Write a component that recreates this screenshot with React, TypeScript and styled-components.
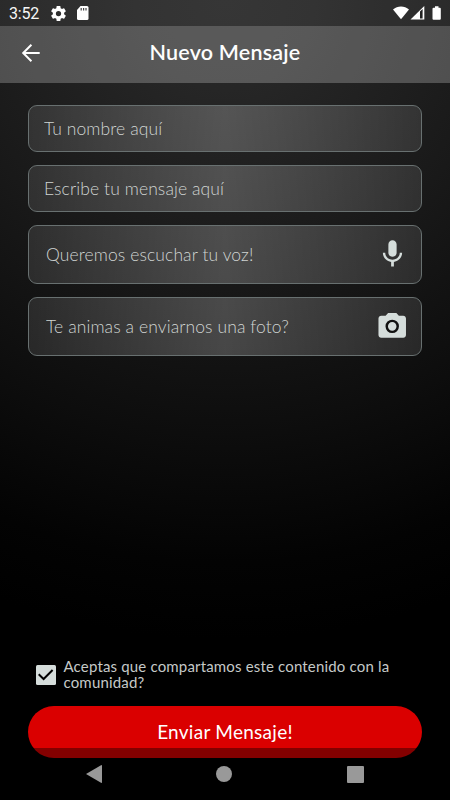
import React from "react";
import styled, { createGlobalStyle } from "styled-components";

const GlobalStyle = createGlobalStyle`
  * { box-sizing: border-box; }
  body { margin: 0; background: #000; }
`;

const Screen = styled.div`
  position: relative;
  display: flex;
  flex-direction: column;
  width: 450px;
  height: 800px;
  overflow: hidden;
  font-family: Lato, "Open Sans", sans-serif;
  background: radial-gradient(ellipse 640px 640px at 50% 0, #292929 0%, #262626 14%, #191919 43%, #0d0d0d 68%, #030303 88%, #000 100%), #000;
`;

const StatusBar = styled.div`
  display: flex;
  align-items: center;
  height: 26px;
  padding: 0 8px 0 9px;
  background: rgba(255, 255, 255, 0.063);
  color: #fff;
  font-family: Roboto, sans-serif;
  font-size: 16px;
`;

const Clock = styled.span`
  width: 42px;
  padding-top: 2px;
  line-height: 26px;
  letter-spacing: -0.2px;
  opacity: 0.96;
`;

const StatusIcons = styled.div<{ $end?: boolean }>`
  display: flex;
  align-items: center;
  margin-left: ${(p) => (p.$end ? "auto" : "0")};
`;

const Header = styled.header`
  display: grid;
  grid-template-columns: 50px 1fr 50px;
  align-items: center;
  height: 57px;
  padding: 0 6px;
  background: rgba(255, 255, 255, 0.23);
`;

const BackButton = styled.button`
  display: flex;
  justify-content: center;
  padding: 0 0 4px;
  border: 0;
  background: none;
`;

const Title = styled.h1`
  margin: 0;
  padding-bottom: 6px;
  color: #fff;
  font-size: 21.5px;
  font-weight: 600;
  letter-spacing: 0.2px;
  line-height: 26px;
  text-align: center;
  white-space: nowrap;
  opacity: 0.99;
`;

const Form = styled.main`
  display: flex;
  flex: 1;
  flex-direction: column;
  gap: 13px;
  padding: 22px 28px 0;
`;

const Field = styled.div<{ $tall?: boolean }>`
  display: flex;
  flex-shrink: 0;
  align-items: center;
  justify-content: space-between;
  height: ${(p) => (p.$tall ? 59 : 47)}px;
  padding: 0 ${(p) => (p.$tall ? "12px 0 17px" : "15px")};
  border: 1.5px solid #687070;
  border-radius: 9px;
  background: linear-gradient(90deg, rgba(255, 255, 255, 0.1), rgba(255, 255, 255, 0.22) 50%, rgba(255, 255, 255, 0.1));
`;

const Placeholder = styled.span`
  padding-bottom: 1px;
  color: #d2d7d5;
  font-size: 17.5px;
  font-weight: 300;
  letter-spacing: 0.1px;
  white-space: nowrap;
  opacity: 0.99;
`;

const Consent = styled.label`
  display: flex;
  align-items: center;
  gap: 7.5px;
  margin: auto 0 2px;
  padding-left: 8px;
`;

const ConsentText = styled.span`
  padding-bottom: 1px;
  color: #c8cccb;
  font-size: 15px;
  letter-spacing: 0.17px;
  line-height: 15.5px;
  white-space: nowrap;
  opacity: 0.99;
`;

const SendButton = styled.button`
  flex-shrink: 0;
  height: 52px;
  margin-bottom: 42px;
  padding: 0 0 2px;
  border: 0;
  border-radius: 26px;
  background: #da0000;
  color: #fff;
  font-family: inherit;
  font-size: 19px;
  letter-spacing: 0.27px;
`;

const NavBar = styled.nav`
  position: absolute;
  right: 0;
  bottom: 0;
  left: 0;
  display: flex;
  align-items: center;
  justify-content: space-between;
  height: 52px;
  padding: 0 86.5px 0 86px;
  background: rgba(0, 0, 0, 0.4);
`;

const GearIcon = () => (
  <svg width="15" height="15" viewBox="2 2 20 20" fill="#fff">
    <path d="M19.43 12.98c.04-.32.07-.64.07-.98s-.03-.66-.07-.98l2.11-1.65c.19-.15.24-.42.12-.64l-2-3.46c-.12-.22-.39-.3-.61-.22l-2.49 1c-.52-.4-1.08-.73-1.69-.98l-.38-2.65C14.46 2.18 14.25 2 14 2h-4c-.25 0-.46.18-.49.42l-.38 2.65c-.61.25-1.17.59-1.69.98l-2.49-1c-.23-.09-.49 0-.61.22l-2 3.46c-.13.22-.07.49.12.64l2.11 1.65c-.04.32-.07.65-.07.98s.03.66.07.98l-2.11 1.65c-.19.15-.24.42-.12.64l2 3.46c.12.22.39.3.61.22l2.49-1c.52.4 1.08.73 1.69.98l.38 2.65c.03.24.24.42.49.42h4c.25 0 .46-.18.49-.42l.38-2.65c.61-.25 1.17-.59 1.69-.98l2.49 1c.23.09.49 0 .61-.22l2-3.46c.12-.22.07-.49-.12-.64l-2.11-1.65zM12 15.5a3.5 3.5 0 1 1 0-7 3.5 3.5 0 0 1 0 7z" />
  </svg>
);

const SdCardIcon = () => (
  <svg width="31" height="16" viewBox="0 0 31 16">
    <path d="M14.500 1H21a1.500 1.500 0 0 1 1.500 1.500v11A1.500 1.500 0 0 1 21 15h-8.500a1.500 1.500 0 0 1-1.500-1.500V5z" fill="#fff" />
    <path d="M15.200 3v2.400M17.600 3v2.400M20 3v2.400" stroke="#444" strokeWidth="1.200" />
  </svg>
);

const SignalIcons = () => (
  <svg width="50" height="16" viewBox="0 0 50 16">
    <path d="M1 4.600C5.500.4 12.500.4 17 4.600L9 14.300z" fill="#fff" />
    <path d="M18.500 14.500 32.300 1v13.500z" fill="#fff" />
    <path d="M28 6.500v7h2.600V4z" fill="#222" />
    <path d="M43 1.200h3.500v1.600h1.300q1 0 1 1v10q0 1-1 1h-6.300q-1 0-1-1v-10q0-1 1-1H43z" fill="#fff" />
  </svg>
);

const BackIcon = () => (
  <svg width="20" height="20" viewBox="0.300 0 20 20" fill="none" stroke="#fff" strokeWidth="2">
    <path d="M19 10H2.500M10.700 1.800 2.500 10l8.200 8.200" />
  </svg>
);

const MicIcon = () => (
  <svg width="33" height="33" viewBox="0 0.300 24 24" fill="#d5dddb">
    <path d="M12 14c1.660 0 2.990-1.340 2.990-3L15 5c0-1.660-1.340-3-3-3S9 3.340 9 5v6c0 1.660 1.340 3 3 3zm5.300-3c0 3-2.540 5.100-5.300 5.100S6.700 14 6.700 11H5c0 3.410 2.720 6.230 6 6.720V21h2v-3.280c3.280-.48 6-3.300 6-6.720h-1.700z" />
  </svg>
);

const CameraIcon = () => (
  <svg width="33" height="33" viewBox="0.200 0.900 24 24">
    <path d="M9 3 7.170 5H4c-1.100 0-2 .9-2 2v12c0 1.100.9 2 2 2h16c1.100 0 2-.9 2-2V7c0-1.100-.9-2-2-2h-3.170L15 3H9z" fill="#d5dddb" />
    <circle cx="12" cy="12.800" r="4" fill="none" stroke="#111" strokeWidth="1.800" />
  </svg>
);

const CheckIcon = () => (
  <svg width="20" height="20" viewBox="0 0 20 20">
    <rect width="20" height="20" rx="1.500" fill="#d5dddb" />
    <path d="m2.700 9.300 4.900 4.700 9-9" fill="none" stroke="#000" strokeWidth="2" />
  </svg>
);

const NavBackIcon = () => (
  <svg width="16" height="18" viewBox="0 0 16 18">
    <path d="M0 9 15 .2q1-.5 1 .6v16.400q0 1.100-1 .6z" fill="#999" />
  </svg>
);

const NavHomeIcon = () => (
  <svg width="16" height="16" viewBox="0 0 16 16">
    <circle cx="8" cy="8" r="8" fill="#999" />
  </svg>
);

const NavRecentIcon = () => (
  <svg width="17" height="17" viewBox="0 0 17 17">
    <rect width="17" height="17" rx="1" fill="#999" />
  </svg>
);

export default function App() {
  return (
    <>
      <GlobalStyle />
      <Screen>
        <StatusBar>
          <Clock>3:52</Clock>
          <StatusIcons>
            <GearIcon />
            <SdCardIcon />
          </StatusIcons>
          <StatusIcons $end>
            <SignalIcons />
          </StatusIcons>
        </StatusBar>
        <Header>
          <BackButton aria-label="Volver">
            <BackIcon />
          </BackButton>
          <Title>Nuevo Mensaje</Title>
        </Header>
        <Form>
          <Field>
            <Placeholder>Tu nombre aquí</Placeholder>
          </Field>
          <Field>
            <Placeholder>Escribe tu mensaje aquí</Placeholder>
          </Field>
          <Field $tall>
            <Placeholder>Queremos escuchar tu voz!</Placeholder>
            <MicIcon />
          </Field>
          <Field $tall>
            <Placeholder>Te animas a enviarnos una foto?</Placeholder>
            <CameraIcon />
          </Field>
          <Consent>
            <CheckIcon />
            <ConsentText>
              Aceptas que compartamos este contenido con la
              <br />
              comunidad?
            </ConsentText>
          </Consent>
          <SendButton>Enviar Mensaje!</SendButton>
        </Form>
        <NavBar>
          <NavBackIcon />
          <NavHomeIcon />
          <NavRecentIcon />
        </NavBar>
      </Screen>
    </>
  );
}
